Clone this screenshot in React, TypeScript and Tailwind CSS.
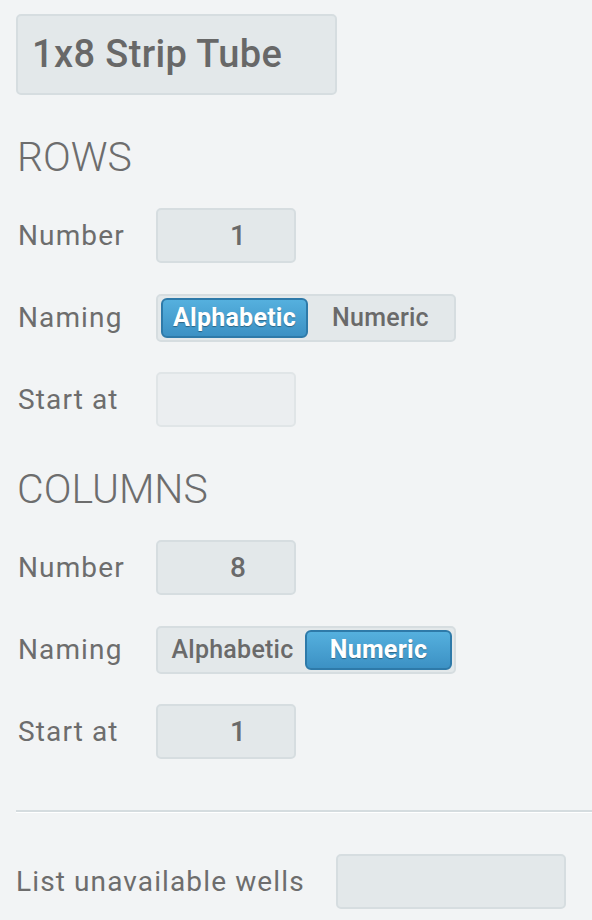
const font = { fontFamily: "Roboto, 'Liberation Sans', sans-serif" };

function Field({ value, disabled }: { value?: string; disabled?: boolean }) {
  return (
    <div
      className={`w-[140px] h-[55px] rounded-[5px] border-2 flex items-center justify-center pl-6 text-[28px] font-medium text-[#6a6a6a] ${
        disabled ? "bg-[#ebeef0] border-[#e0e5e7]" : "bg-[#e3e8ea] border-[#d6dde0]"
      }`}
    >
      {value}
    </div>
  );
}

function Toggle({ active }: { active: "Alphabetic" | "Numeric" }) {
  return (
    <div className="w-[300px] h-[48px] rounded-[5px] border-2 border-[#d6dde0] bg-[#e3e8ea] flex items-center gap-px pl-[3px] pr-[2px]">
      {(["Alphabetic", "Numeric"] as const).map((opt) =>
        opt === active ? (
          <div
            key={opt}
            className="flex-1 h-[40px] rounded-[6px] border-2 border-[#2e7aa9] bg-gradient-to-b from-[#55b0de] to-[#3c91c4] flex items-center justify-center text-[25px] font-bold text-white tracking-[0.01em] [text-shadow:0_1px_1px_rgba(0,0,0,0.35)]"
          >
            {opt}
          </div>
        ) : (
          <div key={opt} className="flex-1 h-[40px] flex items-center justify-center text-[25px] font-medium text-[#6a6a6a] tracking-[0.01em]">
            {opt}
          </div>
        )
      )}
    </div>
  );
}

function Row({ label, children, className = "" }: { label: string; children: React.ReactNode; className?: string }) {
  return (
    <div className={`flex items-center ${className}`}>
      <div className="w-[140px] pl-[2px] text-[28px] text-[#6d6d6d] tracking-[0.04em]">{label}</div>
      {children}
    </div>
  );
}

function Section({ title, number, naming, start, startDisabled }: {
  title: string;
  number: string;
  naming: "Alphabetic" | "Numeric";
  start?: string;
  startDisabled?: boolean;
}) {
  return (
    <div className="pr-4">
      <h2 className="mt-[38px] h-[48px] leading-[48px] pl-[1px] text-[41px] font-light text-[#6d6d6d]">{title}</h2>
      <Row label="Number" className="mt-[27px]">
        <Field value={number} />
      </Row>
      <Row label="Naming" className="mt-[31px]">
        <Toggle active={naming} />
      </Row>
      <Row label="Start at" className="mt-[30px]">
        <Field value={start} disabled={startDisabled} />
      </Row>
    </div>
  );
}

export default function App() {
  return (
    <div className="min-h-[920px] bg-[#f2f4f5] pl-4 pt-[14px]" style={font}>
      <div className="w-[321px] h-[81px] rounded-[5px] border-2 border-[#d6dde0] bg-[#e3e8ea] flex items-center pl-[14px] text-[38px] font-medium text-[#686868] tracking-[0.01em]">
        1x8 Strip Tube
      </div>

      <Section title="ROWS" number="1" naming="Alphabetic" startDisabled />
      <Section title="COLUMNS" number="8" naming="Numeric" start="1" />

      {/* divider */}
      <div className="mt-[51px] h-[2px] bg-[#d5dcdf]" />
      <div className="h-px bg-white" />

      <div className="mt-[41px] flex items-center">
        <div className="w-[320px] text-[28px] text-[#6d6d6d] tracking-[0.04em]">List unavailable wells</div>
        <div className="w-[230px] h-[55px] rounded-[5px] border-2 border-[#d6dde0] bg-[#e3e8ea]" />
      </div>
    </div>
  );
}
